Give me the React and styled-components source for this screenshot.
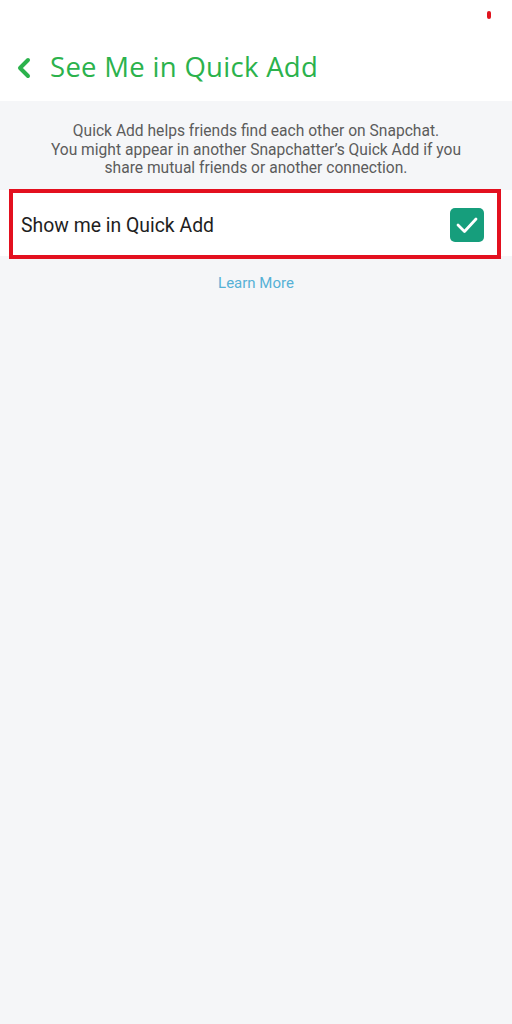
import React from "react";
import styled, { createGlobalStyle } from "styled-components";

const GlobalStyle = createGlobalStyle`
    html, body {
        margin: 0;
        padding: 0;
        background: #f5f6f8;
    }
    body {
        font-family: Roboto, "Liberation Sans", sans-serif;
    }
`;

const Page = styled.div`
    width: 512px;
    min-height: 1024px;
    background: #f5f6f8;
`;

const Header = styled.header`
    position: relative;
    height: 101px;
    background: #ffffff;
    display: flex;
    align-items: flex-end;
    padding: 0 0 16px 16px;
    box-sizing: border-box;
`;

const StatusDot = styled.span`
    position: absolute;
    top: 11px;
    right: 21px;
    width: 4px;
    height: 8px;
    border-radius: 2px;
    background: #e0141e;
`;

const BackButton = styled.button`
    border: none;
    background: none;
    padding: 0 0 6px;
    margin-right: 18px;
    display: flex;
    align-items: center;
    color: #2bb24c;
    cursor: pointer;
`;

const Title = styled.h1`
    margin: 0;
    font-family: "Open Sans", sans-serif;
    font-weight: 400;
    font-size: 27.5px;
    letter-spacing: 0.3px;
    color: #2bb24c;
`;

const Intro = styled.p`
    margin: 0;
    padding: 21px 40px 12px;
    text-align: center;
    font-size: 15.6px;
    line-height: 18.5px;
    color: #5c5c5c;
`;

const Row = styled.label`
    position: relative;
    height: 66px;
    box-sizing: border-box;
    background: #ffffff;
    display: flex;
    align-items: center;
    justify-content: space-between;
    padding: 5px 28px 0 21px;
`;

const Highlight = styled.span`
    position: absolute;
    left: 9px;
    right: 11px;
    top: -1px;
    bottom: -3px;
    border: 4px solid #e3101f;
    pointer-events: none;
`;

const RowLabel = styled.span`
    font-size: 19.4px;
    color: #1e1e1e;
`;

const Check = styled.span`
    width: 34px;
    height: 34px;
    border-radius: 5px;
    background: ${(p) => (p.$on ? "#169e7c" : "#ffffff")};
    display: flex;
    align-items: center;
    justify-content: center;
`;

const LearnMore = styled.a`
    display: block;
    margin-top: 18px;
    text-align: center;
    font-size: 15px;
    color: #56b1d6;
    text-decoration: none;
`;

const App = () => {
    return (
        <>
            <GlobalStyle />
            <Page>
                <Header>
                    <StatusDot />
                    <BackButton aria-label="Back">
                        <svg width="16" height="22" viewBox="0 0 16 22">
                            <path
                                d="M12 3 L4 11 L12 19"
                                fill="none"
                                stroke="currentColor"
                                strokeWidth="4"
                                strokeLinecap="round"
                                strokeLinejoin="round"
                            />
                        </svg>
                    </BackButton>
                    <Title>See Me in Quick Add</Title>
                </Header>
                <Intro>
                    Quick Add helps friends find each other on Snapchat.
                    <br />
                    You might appear in another Snapchatter’s Quick Add if you
                    share mutual friends or another connection.
                </Intro>
                <Row>
                    <Highlight />
                    <RowLabel>Show me in Quick Add</RowLabel>
                    <Check $on>
                        <svg width="24" height="20" viewBox="0 0 24 20">
                            <path
                                d="M3 10 L9.5 16.5 L21 4"
                                fill="none"
                                stroke="#ffffff"
                                strokeWidth="2.8"
                                strokeLinecap="round"
                                strokeLinejoin="round"
                            />
                        </svg>
                    </Check>
                </Row>
                <LearnMore href="#">Learn More</LearnMore>
            </Page>
        </>
    );
};

export default App;
